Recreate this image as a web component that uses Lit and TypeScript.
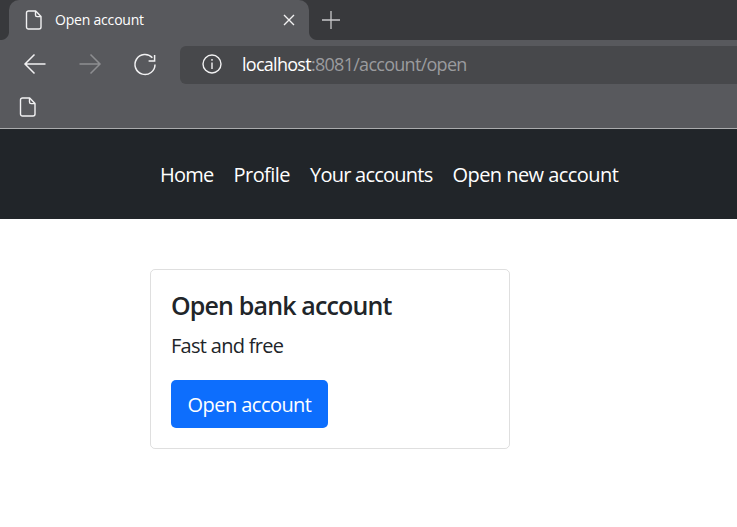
import { LitElement, html, css, svg } from "lit";
import { customElement } from "lit/decorators.js";

const fileIcon = svg`<svg class="file" width="18" height="20" viewBox="0 0 18 20" fill="none" stroke="#f1f1f2" stroke-width="1.4" stroke-linejoin="round"><path d="M3.5 1h7.2L16 6.6V17a2 2 0 0 1-2 2H3.5a2 2 0 0 1-2-2V3a2 2 0 0 1 2-2z"/><path d="M10.5 1v4a1.6 1.6 0 0 0 1.6 1.6H16"/></svg>`;

@customElement("app-root")
export class AppRoot extends LitElement {
  static styles = css`
    :host { display: block; font-family: "Open Sans", "Noto Sans", sans-serif; background: #fff; height: 527px; overflow: hidden; }
    .chrome { background: #58595d; height: 128px; border-bottom: 1px solid #aaabad; }
    .strip { height: 40px; display: flex; background: #38393c; }
    .tab { position: relative; margin-left: 9px; width: 300px; box-sizing: border-box; background: #58595d; border-radius: 10px 10px 0 0; display: flex; align-items: center; padding: 0 14px 0 16px; color: #fff; font-size: 14px; }
    .tab::before, .tab::after { content: ""; position: absolute; bottom: 0; width: 8px; height: 8px; }
    .tab::before { left: -8px; background: radial-gradient(circle at 0 0, #38393c 7.5px, #58595d 8.5px); }
    .tab::after { right: -8px; background: radial-gradient(circle at 100% 0, #38393c 7.5px, #58595d 8.5px); }
    .tab .title { flex: 1; margin-left: 12px; padding-bottom: 2px; letter-spacing: -0.2px; }
    .plus { margin-left: 13px; align-self: center; display: flex; }
    .toolbar { height: 48px; display: flex; align-items: center; padding: 0 0 2px 22px; }
    .nav-btn { width: 26px; height: 26px; display: flex; margin-right: 29px; }
    .omni { flex: 1; height: 38px; margin-left: -7px; margin-top: 2px; background: #47484b; border-radius: 6px 0 0 6px; display: flex; align-items: center; padding: 0 0 2px 22px; box-sizing: border-box; font-size: 18px; letter-spacing: -0.72px; }
    .host { color: #fff; margin-left: 20px; }
    .rest { color: #9a9b9e; }
    .bookmarks { height: 40px; display: flex; align-items: center; padding: 0 0 6px 19px; box-sizing: border-box; }
    nav { background: #212529; height: 90px; display: flex; align-items: center; padding-left: 150px; }
    nav a { color: #fff; font-size: 20px; padding: 0 10px; letter-spacing: -0.55px; }
    nav a.home { letter-spacing: -0.75px; }
    nav a.yours { letter-spacing: -0.76px; }
    nav a.open { letter-spacing: -0.55px; }
    .card { margin: 50px 0 0 150px; width: 360px; height: 180px; box-sizing: border-box; border: 1px solid rgba(0,0,0,.125); border-radius: 5px; padding: 20px; color: #212529; }
    h5 { margin: 0; font-size: 25px; line-height: 30px; font-weight: 600; letter-spacing: -0.85px; }
    p { margin: 11px 0 0; font-size: 20px; line-height: 30px; letter-spacing: -0.7px; }
    button { display: block; margin-top: 19px; font: inherit; font-size: 20px; line-height: 30px; letter-spacing: -0.55px; color: #fff; background: #0d6efd; border: 0; border-radius: 5px; width: 157px; height: 48px; padding: 2px 0 0; }
  `;

  render() {
    return html`
      <div class="chrome">
        <div class="strip">
          <div class="tab">
            ${fileIcon}
            <span class="title">Open account</span>
            <svg width="12" height="12" viewBox="0 0 12 12" stroke="#f1f1f2" stroke-width="1.4"><path d="M1 1l10 10M11 1L1 11"/></svg>
          </div>
          <div class="plus">
            <svg width="18" height="18" viewBox="0 0 18 18" stroke="#c8c8ca" stroke-width="1.3"><path d="M9 0v18M0 9h18"/></svg>
          </div>
        </div>
        <div class="toolbar">
          <div class="nav-btn"><svg width="26" height="26" viewBox="0 0 26 26" fill="none" stroke="#f1f1f2" stroke-width="1.5"><path d="M23.5 13H3M12.5 3.5L3 13l9.5 9.5"/></svg></div>
          <div class="nav-btn"><svg width="26" height="26" viewBox="0 0 26 26" fill="none" stroke="#8d8e91" stroke-width="1.5"><path d="M2.5 13H23M13.5 3.5L23 13l-9.5 9.5"/></svg></div>
          <div class="nav-btn"><svg width="26" height="26" viewBox="0 0 26 26" fill="none" stroke="#f1f1f2" stroke-width="1.5"><path d="M20.4 6.8A10 10 0 1 0 23 13.5"/><path d="M22.6 4v6h-6"/></svg></div>
          <div class="omni">
            <svg width="20" height="20" viewBox="0 0 20 20" fill="none" stroke="#f1f1f2" stroke-width="1.4"><circle cx="10" cy="10" r="9"/><path d="M10 8.5V15M10 5v1.8"/></svg>
            <span class="host">localhost</span><span class="rest">:8081/account/open</span>
          </div>
        </div>
        <div class="bookmarks">${fileIcon}</div>
      </div>
      <nav>
        <a class="home">Home</a><a>Profile</a><a class="yours">Your accounts</a><a class="open">Open new account</a>
      </nav>
      <div class="card">
        <h5>Open bank account</h5>
        <p>Fast and free</p>
        <button>Open account</button>
      </div>
    `;
  }
}
